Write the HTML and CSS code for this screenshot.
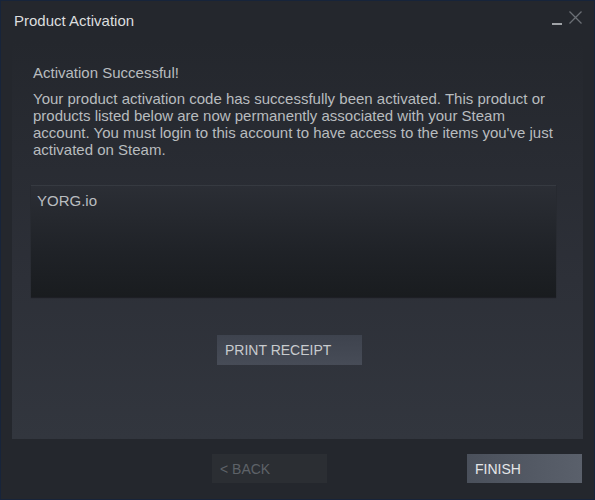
FILE: index.html
```html
<!DOCTYPE html>
<html>
<head>
<meta charset="utf-8">
<link rel="stylesheet" href="styles.css">
</head>
<body>
<div class="window">
  <div class="titlebar">
    <div class="title">Product Activation</div>
    <div class="controls">
      <span class="min"></span>
      <svg class="close" width="13" height="13" viewBox="0 0 13 13"><path d="M0.5 0.5 L12.5 12.5 M12.5 0.5 L0.5 12.5" stroke="#6b6f75" stroke-width="1.3" fill="none"/></svg>
    </div>
  </div>
  <div class="panel">
    <div class="heading">Activation Successful!</div>
    <p class="desc">Your product activation code has successfully been activated. This product or products listed below are now permanently associated with your Steam account. You must login to this account to have access to the items you've just activated on Steam.</p>
    <div class="products">YORG.io</div>
    <div class="print-row"><button class="btn print">PRINT RECEIPT</button></div>
  </div>
  <div class="footer">
    <button class="btn back">&lt; BACK</button>
    <button class="btn finish">FINISH</button>
  </div>
</div>
</body>
</html>
```
FILE: styles.css
```css
html, body {
  margin: 0;
  padding: 0;
  background: #24272d;
}
.window {
  width: 595px;
  height: 500px;
  box-sizing: border-box;
  border: 1px solid #17243a;
  background: #24272d;
  display: flex;
  flex-direction: column;
  font-family: "Liberation Sans", Arial, sans-serif;
  font-size: 15px;
  color: #b8bcbf;
}
.titlebar {
  height: 39px;
  display: flex;
  align-items: flex-start;
  justify-content: space-between;
  padding: 0 12px 0 13px;
  flex: none;
}
.title {
  color: #dcdedf;
  margin-top: 11px;
  line-height: 17px;
}
.controls {
  display: flex;
  align-items: flex-start;
  margin-top: 10px;
}
.min {
  display: block;
  width: 10px;
  height: 2px;
  background: #a0a3a7;
  margin-top: 12px;
  margin-right: 7px;
}
.close {
  display: block;
}
.panel {
  flex: none;
  height: 399px;
  margin: 0 11px;
  box-sizing: border-box;
  padding: 24px 27px 0 19px;
  background: linear-gradient(to bottom, #24272d 0%, #2d3038 60%, #32363e 100%);
}
.heading {
  line-height: 17px;
  padding-left: 2px;
}
.desc {
  margin: 9px 0 0 0;
  padding-left: 2px;
  line-height: 17px;
}
.products {
  margin-top: 27px;
  height: 112px;
  box-sizing: border-box;
  padding: 6px 6px;
  line-height: 17px;
  color: #b9bdc0;
  border-top: 1px solid #363a41;
  background: linear-gradient(to bottom, #2b2e35 0%, #1f2227 60%, #191c1f 100%);
  box-shadow: 0 1px 1px rgba(0,0,0,0.35);
}
.print-row {
  margin-top: 38px;
  padding-left: 186px;
}
.btn {
  font-family: "Liberation Sans", Arial, sans-serif;
  font-size: 14px;
  border: none;
  text-align: left;
  padding: 0 8px;
  margin: 0;
  cursor: pointer;
  display: block;
}
.print {
  width: 145px;
  height: 30px;
  color: #c8cbce;
  background: linear-gradient(to bottom, #3e434e 0%, #474c57 100%);
}
.footer {
  flex: 1;
  display: flex;
  align-items: flex-start;
  padding-top: 15px;
  padding-left: 211px;
}
.back {
  width: 115px;
  height: 29px;
  color: #5e6268;
  background: #2b2e33;
}
.finish {
  width: 115px;
  height: 29px;
  margin-left: 140px;
  color: #e4e6e8;
  background: linear-gradient(to right, #4a505b 0%, #5a606b 100%);
}
```
